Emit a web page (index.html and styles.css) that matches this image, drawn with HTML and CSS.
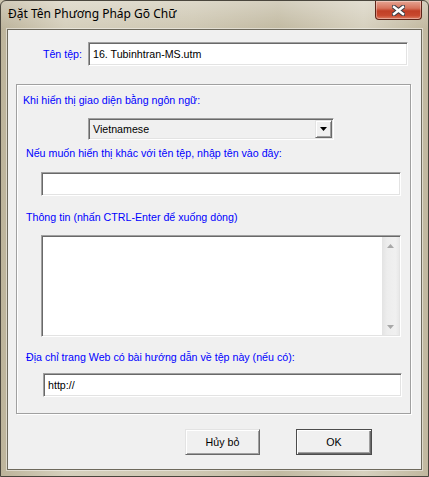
FILE: index.html
```html
<!DOCTYPE html>
<html lang="vi">
<head>
  <meta charset="UTF-8">
  <title>Đặt Tên Phương Pháp Gõ Chữ</title>
  <link rel="stylesheet" href="styles.css">
</head>
<body>
  <div class="window">
    <div class="titlebar">
      <span class="title">Đặt Tên Phương Pháp Gõ Chữ</span>
      <button class="close-btn" aria-label="Đóng">
        <svg width="13" height="11" viewBox="0 0 13 11">
          <path d="M2 2 L11 9 M11 2 L2 9" stroke="#3c3c44" stroke-width="4.6" stroke-linecap="square"/>
          <path d="M2 2 L11 9 M11 2 L2 9" stroke="#fff" stroke-width="2.4" stroke-linecap="square"/>
        </svg>
      </button>
    </div>

    <div class="client">
      <div class="file-row">
        <label class="file-label" for="fileName">Tên tệp:</label>
        <input class="field file-field" id="fileName" type="text" value="16. Tubinhtran-MS.utm">
      </div>

      <div class="group">
        <div class="caption caption-first">Khi hiển thị giao diện bằng ngôn ngữ:</div>
        <div class="combo">
          <span>Vietnamese</span>
          <span class="combo-btn">
            <svg width="7" height="4" viewBox="0 0 7 4"><path d="M0 0 H7 L3.5 4 Z" fill="#000"/></svg>
          </span>
        </div>

        <div class="caption caption-display">Nếu muốn hiển thị khác với tên tệp, nhập tên vào đây:</div>
        <input class="field field-display" type="text" value="">

        <div class="caption caption-info">Thông tin (nhấn CTRL-Enter để xuống dòng)</div>
        <div class="memo">
          <div class="scrollbar">
            <span class="sb-box"><svg width="7" height="4" viewBox="0 0 7 4"><path d="M0 4 H7 L3.5 0 Z" fill="#a8a8a8"/></svg></span>
            <span class="sb-box"><svg width="7" height="4" viewBox="0 0 7 4"><path d="M0 0 H7 L3.5 4 Z" fill="#a8a8a8"/></svg></span>
          </div>
        </div>

        <div class="caption caption-web">Địa chỉ trang Web có bài hướng dẫn về tệp này (nếu có):</div>
        <input class="field field-web" type="text" value="http://">
      </div>

      <div class="actions">
        <button class="btn">Hủy bỏ</button>
        <button class="btn btn-default">OK</button>
      </div>
    </div>
  </div>
</body>
</html>
```

FILE: styles.css
```css
* {
  box-sizing: border-box;
}
body {
  margin: 0;
  font-family: "Liberation Sans", Arial, sans-serif;
  font-size: 8pt;
  background: #cbc4ae;
}

/* window frame (aero glass, beige) */
.window {
  width: 429px;
  height: 477px;
  border: 1px solid #4a463d;
  border-radius: 6px 6px 0 0;
  padding: 0 6px 6px;
  display: flex;
  flex-direction: column;
  background:
    linear-gradient(180deg, rgba(255, 255, 255, 0.3), rgba(255, 255, 255, 0) 28px),
    linear-gradient(90deg, #bdb49b, #d5cfbc 15%, #cec7b2 45%, #c2baa2 65%, #d6d0be 85%, #c1b89f);
}
.titlebar {
  height: 28px;
  display: flex;
  justify-content: space-between;
  align-items: flex-start;
}
.title {
  font-family: "Noto Sans", "DejaVu Sans", sans-serif;
  font-size: 12px;
  line-height: 16px;
  margin: 5px 0 0 1px;
  color: #000;
}
.close-btn {
  width: 47px;
  height: 19px;
  padding: 0;
  border: 1px solid #5e2418;
  border-top: none;
  border-radius: 0 0 4px 4px;
  display: flex;
  align-items: center;
  justify-content: center;
  background: linear-gradient(180deg, #e6a593 0%, #d7735c 40%, #c13f26 55%, #c8482e 80%, #dd7d62 100%);
  box-shadow: inset 0 0 0 1px rgba(255, 255, 255, 0.35);
}

/* client area */
.client {
  height: 441px;
  border: 1px solid #6d695c;
  background: #f0f0f0;
  padding-top: 12px;
  box-shadow: 0 0 0 1px rgba(255, 255, 255, 0.45);
}
.file-row {
  display: flex;
  align-items: center;
}
.file-label {
  width: 80px;
  text-align: right;
  padding-right: 6px;
  color: #0000ff;
  line-height: 13px;
}

/* sunken edit boxes */
.field {
  height: 24px;
  padding: 0 4px;
  margin: 0;
  font-family: "Liberation Sans", Arial, sans-serif;
  font-size: 8pt;
  color: #000;
  background: #fff;
  border: 1px solid;
  border-color: #a0a0a0 #fff #fff #a0a0a0;
  box-shadow: inset 1px 1px 0 #696969, inset -1px -1px 0 #e3e3e3;
  outline: none;
}
.file-field {
  width: 320px;
}

.group {
  margin: 18px 0 0 8px;
  width: 395px;
  padding: 9px 0 16px;
  border: 1px solid #a0a0a0;
  box-shadow: inset 1px 1px 0 #fff, 1px 1px 0 #fff;
  display: flex;
  flex-direction: column;
  align-items: flex-start;
}
.caption {
  color: #0000ff;
  line-height: 13px;
  margin-left: 9px;
}
.caption-first {
  margin-left: 6px;
}
.caption-display {
  margin-top: 7px;
}
.caption-info {
  margin-top: 15px;
}
.caption-web {
  margin-top: 14px;
}

.combo {
  margin: 11px 0 0 71px;
  width: 246px;
  height: 22px;
  padding-left: 4px;
  display: flex;
  align-items: center;
  background: #f0f0f0;
  border: 1px solid;
  border-color: #a0a0a0 #fff #fff #a0a0a0;
  box-shadow: inset 1px 1px 0 #696969, inset -1px -1px 0 #e3e3e3;
}
.combo-btn {
  margin-left: auto;
  margin-right: 1px;
  width: 17px;
  height: 18px;
  display: flex;
  align-items: center;
  justify-content: center;
  background: #f0f0f0;
  border: 1px solid;
  border-color: #e3e3e3 #696969 #696969 #e3e3e3;
  box-shadow: inset 1px 1px 0 #fff, inset -1px -1px 0 #a0a0a0;
}

.field-display {
  margin-top: 12px;
  margin-left: 24px;
  width: 360px;
}
.memo {
  margin: 11px 0 0 24px;
  width: 360px;
  height: 102px;
  padding: 1px;
  display: flex;
  justify-content: flex-end;
  background: #fff;
  border: 1px solid;
  border-color: #a0a0a0 #fff #fff #a0a0a0;
  box-shadow: inset 1px 1px 0 #696969, inset -1px -1px 0 #e3e3e3;
}
.scrollbar {
  width: 17px;
  display: flex;
  flex-direction: column;
  justify-content: space-between;
  background: linear-gradient(90deg, #e3e3e3, #ededed 30%, #f0f0f0 80%, #e8e8e8);
}
.sb-box {
  height: 17px;
  display: flex;
  align-items: center;
  justify-content: center;
}
.field-web {
  margin-top: 9px;
  margin-left: 26px;
  width: 359px;
}

/* push buttons */
.actions {
  margin-top: 15px;
  padding-left: 177px;
  display: flex;
  gap: 36px;
}
.btn {
  width: 75px;
  height: 26px;
  padding: 0;
  font-family: "Liberation Sans", Arial, sans-serif;
  font-size: 8pt;
  color: #000;
  background: #f0f0f0;
  border: 1px solid;
  border-color: #e3e3e3 #696969 #696969 #e3e3e3;
  box-shadow: inset 1px 1px 0 #fff, inset -1px -1px 0 #a0a0a0;
}
.btn-default {
  width: 76px;
  border: 1px solid #4c4c4c;
  box-shadow: inset 1px 1px 0 #fff, inset -1px -1px 0 #696969, inset -2px -2px 0 #a0a0a0;
}
```
